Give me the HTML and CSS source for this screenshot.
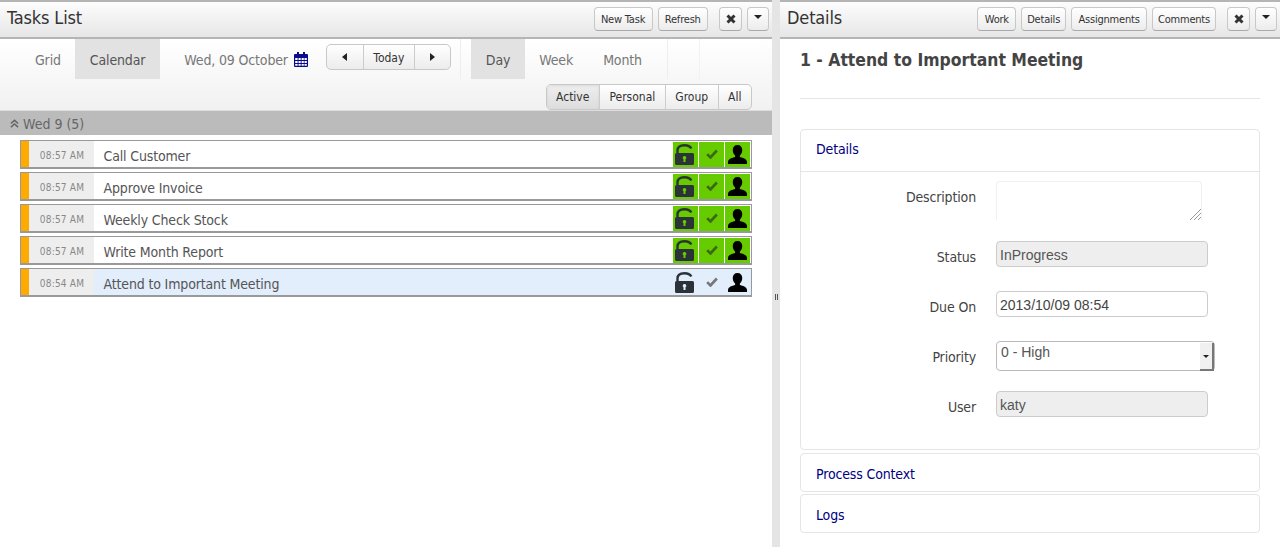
FILE: index.html
```html
<!DOCTYPE html>
<html lang="en">
<head>
  <meta charset="UTF-8">
  <title>Tasks List</title>
  <link rel="stylesheet" href="styles.css">
</head>
<body>
  <svg class="defs" width="0" height="0">
    <symbol id="ico-lock" viewBox="0 0 19 21">
      <path fill="#2b3338" fill-rule="evenodd" d="M1.500 9h16a1.500 1.500 0 0 1 1.500 1.500v9a1.500 1.500 0 0 1-1.500 1.500h-16A1.500 1.500 0 0 1 0 19.500v-9A1.500 1.500 0 0 1 1.500 9zM9.500 12a1.800 1.800 0 0 0-1 3.300V18h2v-2.700a1.800 1.800 0 0 0-1-3.300z"/>
      <path fill="none" stroke="#2b3338" stroke-width="2.400" d="M2.500 9V6.500C2.500 3 5.300 1.200 9.500 1.200c3 0 5.700 1 6.800 3.300"/>
    </symbol>
    <symbol id="ico-check" viewBox="0 0 14 12">
      <path fill="none" stroke="currentColor" stroke-width="3.200" d="M1.200 6.200l4 4L12.800 1.800"/>
    </symbol>
    <symbol id="ico-user" viewBox="0 0 20 20">
      <path fill="#000" d="M10 0c3.200 0 5 2.200 5 5.200 0 2.500-1.100 4.600-2.500 5.800v1.600c2.800 1 7.500 1.600 7.500 5.400v2H0v-2c0-3.800 4.700-4.400 7.500-5.400V11C6.100 9.800 5 7.700 5 5.200 5 2.200 6.800 0 10 0z"/>
    </symbol>
    <symbol id="ico-times" viewBox="0 0 10 10">
      <path fill="none" stroke="#333" stroke-width="3" d="M1.500 1.500l7 7M8.500 1.500l-7 7"/>
    </symbol>
  </svg>

  <!-- left panel -->
  <section class="pane">
    <header class="pane-head">
      <h1>Tasks List</h1>
      <div class="head-actions">
        <button class="btn">New Task</button>
        <button class="btn">Refresh</button>
        <button class="btn btn-icon btn-close"><svg class="ico-x"><use href="#ico-times"/></svg></button>
        <button class="btn btn-drop"><span class="caret"></span></button>
      </div>
    </header>

    <div class="toolbar">
      <div class="toolbar-row">
        <div class="tabs tabs-view">
          <a class="tab">Grid</a>
          <a class="tab tab-on">Calendar</a>
        </div>
        <div class="date-label">
          Wed, 09 October
          <svg class="ico-cal" viewBox="0 0 14 15">
            <path fill="#0a0a8c" d="M1 2h2V0h2v2h4V0h2v2h2a1 1 0 0 1 1 1v11a1 1 0 0 1-1 1H1a1 1 0 0 1-1-1V3a1 1 0 0 1 1-1z"/>
            <path fill="#fff" d="M1.200 6h2.400v2H1.200zM4.500 6h2.200v2H4.500zM7.600 6h2.200v2H7.600zM10.500 6h2.300v2h-2.300zM1.200 9h2.400v2H1.200zM4.500 9h2.200v2H4.500zM7.600 9h2.200v2H7.600zM10.500 9h2.300v2h-2.300zM1.200 12h2.400v1.800H1.200zM4.500 12h2.200v1.800H4.500zM7.600 12h2.200v1.800H7.600zM10.500 12h2.300v1.800h-2.300z"/>
          </svg>
        </div>
        <div class="btn-group nav-group">
          <button class="seg seg-arrow"><span class="arrow-left"></span></button>
          <button class="seg seg-today">Today</button>
          <button class="seg seg-arrow"><span class="arrow-right"></span></button>
        </div>
        <div class="tabs tabs-range">
          <a class="tab tab-on">Day</a>
          <a class="tab">Week</a>
          <a class="tab">Month</a>
        </div>
        <div class="range-end"></div>
      </div>
      <div class="filter-row">
        <div class="btn-group">
          <button class="seg seg-on">Active</button>
          <button class="seg">Personal</button>
          <button class="seg">Group</button>
          <button class="seg">All</button>
        </div>
      </div>
    </div>

    <div class="group-head">
      <svg class="ico-up" viewBox="0 0 10 10"><path fill="none" stroke="#666" stroke-width="1.700" d="M1 5l4-3.500L9 5M1 9l4-3.500L9 9"/></svg>
      Wed 9 (5)
    </div>

    <div class="task-list">
      <div class="task">
        <span class="task-time">08:57 AM</span>
        <span class="task-name">Call Customer</span>
        <span class="task-ico"><svg class="i-lock"><use href="#ico-lock"/></svg></span>
        <span class="task-ico"><svg class="i-check"><use href="#ico-check"/></svg></span>
        <span class="task-ico"><svg class="i-user"><use href="#ico-user"/></svg></span>
      </div>
      <div class="task">
        <span class="task-time">08:57 AM</span>
        <span class="task-name">Approve Invoice</span>
        <span class="task-ico"><svg class="i-lock"><use href="#ico-lock"/></svg></span>
        <span class="task-ico"><svg class="i-check"><use href="#ico-check"/></svg></span>
        <span class="task-ico"><svg class="i-user"><use href="#ico-user"/></svg></span>
      </div>
      <div class="task">
        <span class="task-time">08:57 AM</span>
        <span class="task-name">Weekly Check Stock</span>
        <span class="task-ico"><svg class="i-lock"><use href="#ico-lock"/></svg></span>
        <span class="task-ico"><svg class="i-check"><use href="#ico-check"/></svg></span>
        <span class="task-ico"><svg class="i-user"><use href="#ico-user"/></svg></span>
      </div>
      <div class="task">
        <span class="task-time">08:57 AM</span>
        <span class="task-name">Write Month Report</span>
        <span class="task-ico"><svg class="i-lock"><use href="#ico-lock"/></svg></span>
        <span class="task-ico"><svg class="i-check"><use href="#ico-check"/></svg></span>
        <span class="task-ico"><svg class="i-user"><use href="#ico-user"/></svg></span>
      </div>
      <div class="task task-on">
        <span class="task-time">08:54 AM</span>
        <span class="task-name">Attend to Important Meeting</span>
        <span class="task-ico"><svg class="i-lock"><use href="#ico-lock"/></svg></span>
        <span class="task-ico"><svg class="i-check"><use href="#ico-check"/></svg></span>
        <span class="task-ico"><svg class="i-user"><use href="#ico-user"/></svg></span>
      </div>
    </div>
  </section>

  <!-- splitter -->
  <div class="splitter"><span class="grip"></span></div>

  <!-- right panel -->
  <section class="pane">
    <header class="pane-head">
      <h1>Details</h1>
      <div class="head-actions">
        <button class="btn">Work</button>
        <button class="btn btn-tight">Details</button>
        <button class="btn">Assignments</button>
        <button class="btn btn-tight">Comments</button>
        <button class="btn btn-icon btn-close"><svg class="ico-x"><use href="#ico-times"/></svg></button>
        <button class="btn btn-drop"><span class="caret"></span></button>
      </div>
    </header>

    <div class="details">
      <h2>1 - Attend to Important Meeting</h2>
      <hr>

      <div class="acc acc-open">
        <div class="acc-head acc-head-open">Details</div>
        <div class="acc-body">
          <div class="field field-desc">
            <label>Description</label>
            <div class="fake-textarea"><svg class="resize" viewBox="0 0 12 12"><path fill="none" stroke="#999" d="M1 12L12 1M5 12l7-7M9 12l3-3"/></svg></div>
          </div>
          <div class="field">
            <label>Status</label>
            <input class="input" value="InProgress" disabled>
          </div>
          <div class="field">
            <label>Due On</label>
            <input class="input input-live" value="2013/10/09 08:54">
          </div>
          <div class="field field-select">
            <label>Priority</label>
            <div class="fake-select">0 - High<span class="select-btn"><span class="caret caret-sm"></span></span></div>
          </div>
          <div class="field">
            <label>User</label>
            <input class="input" value="katy" disabled>
          </div>
        </div>
      </div>

      <div class="acc"><div class="acc-head">Process Context</div></div>
      <div class="acc"><div class="acc-head">Logs</div></div>
    </div>
  </section>
</body>
</html>
```

FILE: styles.css
```css
* { box-sizing: border-box; }
html, body { margin: 0; height: 547px; overflow: hidden; }
body { display: grid; grid-template-columns: 772px 8px 500px; background: #fff; color: #555; font-family: "DejaVu Sans", Verdana, sans-serif; font-stretch: condensed; font-size: 14px; letter-spacing: -0.15px; }
.defs { position: absolute; }
button { font-family: inherit; font-stretch: condensed; cursor: pointer; }

.pane { min-width: 0; }
.pane-head { height: 39px; display: flex; align-items: flex-start; justify-content: space-between; border-top: 2px solid #b5b5b5; border-bottom: 2px solid #b5b5b5; background: linear-gradient(#fdfdfd, #e6e6e6); padding-left: 7px; }
.pane-head h1 { margin: 0; font-size: 18px; font-weight: normal; line-height: 32px; color: #333; }
.head-actions { display: flex; gap: 5px; margin-top: 5px; padding-right: 3px; }
.btn { height: 24px; padding: 0 6.3px; border: 1px solid #c8c8c8; border-bottom-color: #aaa; border-radius: 4px; background: linear-gradient(#fff, #ececec); color: #333; font-size: 11px; letter-spacing: -0.2px; }
.btn-tight { padding: 0 5px; }
.btn-icon { width: 23px; padding: 0; display: flex; align-items: center; justify-content: center; }
.btn-drop { width: 22px; padding: 0; display: flex; align-items: center; justify-content: center; }
.btn-close { margin-left: 6px; }
.ico-x { width: 10px; height: 10px; }
.caret { display: block; width: 0; height: 0; border: 4px solid transparent; border-top: 4px solid #222; border-bottom: 0; margin-bottom: 4px; }
.caret-sm { border-width: 3px 3px 0; margin: 0; }

.toolbar { height: 72px; background: linear-gradient(#fff, #f1f1f1); border-bottom: 1px solid #ddd; }
.toolbar-row { height: 40px; display: flex; align-items: flex-start; }
.tabs { display: flex; height: 40px; }
.tab { display: block; height: 40px; line-height: 42px; padding: 0 15px; color: #777; }
.tab-on { background: #e2e2e2; color: #555; }
.tabs-view { margin-left: 20px; }
.tabs-view .tab:first-child { padding: 0 14px 0 15px; }
.date-label { margin-left: 24px; height: 40px; line-height: 40px; padding-top: 1px; display: flex; align-items: center; gap: 6px; color: #777; }
.ico-cal { width: 14px; height: 15px; }
.nav-group { margin: 5px 0 0 18px; }
.tabs-range { margin-left: 9px; padding: 0 10px; border-left: 1px solid #eee; border-right: 1px solid #eee; }
.tabs-range .tab-on + .tab { padding-left: 14px; }
.range-end { width: 32px; height: 40px; border-right: 1px solid #f2f2f2; }
.btn-group { display: flex; height: 26px; border: 1px solid #c8c8c8; border-radius: 5px; background: linear-gradient(#fff, #ececec); overflow: hidden; }
.seg { height: 24px; padding: 0 9.5px; border: 0; border-left: 1px solid #ccc; background: transparent; font-size: 12px; color: #333; letter-spacing: 0; }
.seg:first-child { border-left: 0; }
.seg-on { background: linear-gradient(#eee, #ddd); box-shadow: inset 0 1px 3px rgba(0,0,0,0.08); }
.seg-arrow { width: 36px; padding: 0; display: flex; align-items: center; justify-content: center; }
.seg-today { width: 51px; padding: 1px 0 0; }
.arrow-left { border: 4px solid transparent; border-right: 5px solid #222; border-left: 0; }
.arrow-right { border: 4px solid transparent; border-left: 5px solid #222; border-right: 0; }
.filter-row { display: flex; justify-content: flex-end; padding: 5px 20px 0 0; }

.group-head { height: 24px; line-height: 24px; background: #bbb; color: #666; padding: 1px 0 0 10px; display: flex; align-items: center; gap: 4px; letter-spacing: 0; }
.ico-up { width: 9px; height: 9px; }

.task-list { padding: 5px 20px 0; display: flex; flex-direction: column; gap: 3px; }
.task { height: 29px; display: flex; align-items: center; border: 1px solid #999; border-bottom-width: 2px; background: #fff; }
.task-on { background: #e2eefc; }
.task-time { width: 73px; height: 100%; padding-left: 1px; background: #eee; border-left: 8px solid #fa0; color: #888; font-size: 10px; line-height: 30px; text-align: center; letter-spacing: 0.2px; }
.task-name { flex: 1; padding: 3px 0 0 9.5px; color: #555; }
.task-ico { width: 25px; height: 25px; margin-right: 1px; background: #6c0; display: flex; align-items: center; justify-content: center; color: #3b6b1a; }
.task-on .task-ico { background: transparent; color: #777; }
.i-lock { width: 19px; height: 21px; margin-left: -2px; }
.i-check { width: 12px; height: 10px; }
.i-user { width: 19px; height: 19px; }

.splitter { background: #e5e5e5; position: relative; }
.grip { position: absolute; left: 3px; top: 294px; width: 3px; height: 6px; border-left: 1px solid #555; border-right: 1px solid #555; }

.details { padding: 0 20px; }
.details h2 { margin: 0; font-size: 17.4px; line-height: 20px; padding-top: 11px; color: #444; letter-spacing: 0; }
.details hr { margin: 28px 0 30px; border: 0; border-top: 1px solid #e5e5e5; }
.acc { border: 1px solid #e5e5e5; border-radius: 4px; margin-bottom: 2px; height: 39px; }
.acc-open { height: 321px; margin-bottom: 3px; }
.acc-head { height: 38px; line-height: 41px; padding-left: 15px; color: #00007f; }
.acc-head-open { height: 42px; line-height: 38px; border-bottom: 1px solid #e5e5e5; }
.acc-body { padding-top: 9px; }

.field { display: grid; grid-template-columns: 175px auto; column-gap: 20px; align-items: center; height: 26px; margin-bottom: 24px; }
.field label { text-align: right; color: #444; margin-top: 5px; }
.field-desc { height: 39px; margin-bottom: 21px; align-items: start; }
.field-desc label { margin-top: 8px; }
.field-select { height: 30px; margin-bottom: 20px; }
.field-select label { margin-top: 2px; }
.input { width: 212px; height: 26px; border: 1px solid #ccc; border-radius: 4px; padding: 2px 3px 0; font-family: "Liberation Sans", Arial, sans-serif; font-size: 14px; color: #555; background: #fff; letter-spacing: 0; }
.input[disabled] { background: #eee; }
.input-live { color: #444; }
.fake-textarea { position: relative; width: 206px; height: 39px; border: 1px solid #f0f0f0; border-bottom: 0; border-radius: 4px 4px 0 0; }
.resize { position: absolute; right: 0; bottom: 0; width: 12px; height: 12px; }
.fake-select { position: relative; width: 219px; height: 30px; border: 1px solid #bbb; border-radius: 4px; padding: 2px 4px; font-family: "Liberation Sans", Arial, sans-serif; font-stretch: normal; font-size: 14px; color: #555; letter-spacing: 0; }
.select-btn { position: absolute; right: 0; top: 1px; width: 14px; height: 28px; background: #f0f0f0; border-right: 2px solid #777; border-bottom: 2px solid #777; display: flex; align-items: center; justify-content: center; }
```
